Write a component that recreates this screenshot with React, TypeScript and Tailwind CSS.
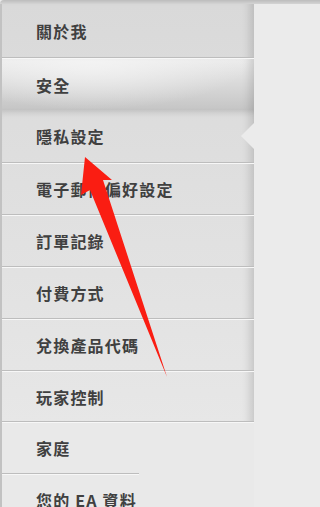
import React from "react";

const Sep = ({ w = "w-full" }: { w?: string }) => (
  <div className={`${w} h-[2px] bg-[linear-gradient(to_bottom,#bdbdbd_50%,#f7f7f7_50%)]`} />
);

const Label = ({ children }: { children: React.ReactNode }) => (
  <span className="text-[16px] leading-none font-bold text-[#404040] tracking-[1.2px] whitespace-pre">{children}</span>
);

export default function App() {
  return (
    <div className="relative w-full min-w-[265px] h-[507px] overflow-hidden bg-[#ebebeb] font-['Noto_Sans_CJK_TC','Noto_Sans_CJK_SC',sans-serif]">
      <div className="h-[4px] bg-[linear-gradient(to_bottom,#bcbcbc,#d4d4d4)] rounded-tl-[4px]" />
      <div className="w-[254px] border-l-2 border-[#c2c2c2] bg-[linear-gradient(to_bottom,#d9d9d9,#e7e7e7)] shadow-[inset_-10px_0_8px_-6px_rgba(0,0,0,0.14)]">
        <div className="h-[53px] flex items-center pl-[34px]"><Label>關於我</Label></div>
        <Sep />
        <div className="h-[51px] flex items-center pl-[34px] bg-[radial-gradient(ellipse_at_35%_0%,#f3f3f3,transparent_70%),linear-gradient(to_bottom,#ececec,#c5c5c5)] shadow-[inset_-10px_0_8px_-6px_rgba(0,0,0,0.14)]">
          <Label>安全</Label>
        </div>
        <div className="relative h-[52px] flex items-center pl-[34px] shadow-[inset_0_7px_6px_-5px_rgba(0,0,0,0.14)]">
          <Label>隱私設定</Label>
          <div className="absolute right-0 top-[13px] w-0 h-0 border-y-[13px] border-y-transparent border-r-[13px] border-r-[#ebebeb]" />
        </div>
        <Sep />
        <div className="h-[50px] flex items-center pl-[34px]"><Label>電子郵件偏好設定</Label></div>
        <Sep />
        <div className="h-[50px] flex items-center pl-[34px]"><Label>訂單記錄</Label></div>
        <Sep />
        <div className="h-[50px] flex items-center pl-[34px]"><Label>付費方式</Label></div>
        <Sep />
        <div className="h-[50px] flex items-center pl-[34px]"><Label>兌換產品代碼</Label></div>
        <Sep />
        <div className="h-[49px] flex items-center pl-[34px]"><Label>玩家控制</Label></div>
        <Sep />
      </div>
      <div className="w-[254px] border-l-2 border-[#c2c2c2] bg-[#e9e9e9]">
        <div className="h-[50px] flex items-center pl-[34px]"><Label>家庭</Label></div>
        <Sep w="w-[137px]" />
        <div className="h-[50px] flex items-center pl-[34px]"><Label>您的 EA 資料</Label></div>
      </div>
      <svg className="absolute left-0 top-0 pointer-events-none" width="265" height="507" viewBox="0 0 265 507">
        <polygon points="85,157 112,180 103,180 167,377 90,190 81,195" fill="#fa1d12" />
      </svg>
    </div>
  );
}
